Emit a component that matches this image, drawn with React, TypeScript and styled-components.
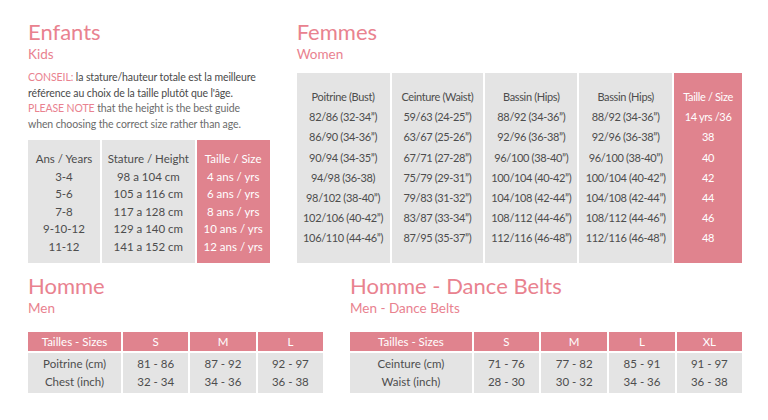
import React from 'react';
import styled, { createGlobalStyle } from 'styled-components';

const GlobalStyle = createGlobalStyle`
  html, body {
    margin: 0;
    padding: 0;
    background: #ffffff;
  }
  body {
    font-family: Lato, "Open Sans", sans-serif;
    color: #4f4f4f;
  }
`;

const PINK_TEXT = '#e9828f';
const PINK_CELL = '#e0838e';
const GRAY_CELL = '#e4e4e4';

const Page = styled.div`
  width: 768px;
  height: 420px;
  box-sizing: border-box;
  padding: 18px 26px 0 28px;
  display: flex;
  flex-direction: column;
  gap: 9px;
`;

const Row = styled.div<{ height: number }>`
  display: flex;
  gap: 27px;
  height: ${(p) => p.height}px;
`;

const Section = styled.div<{ width: number }>`
  width: ${(p) => p.width}px;
  display: flex;
  flex-direction: column;
`;

const Title = styled.h2`
  margin: 0;
  font-weight: 400;
  font-size: 22px;
  line-height: 28px;
  color: ${PINK_TEXT};
`;

const Subtitle = styled.div`
  font-size: 13.5px;
  line-height: 16px;
  color: ${PINK_TEXT};
`;

const Advice = styled.p`
  margin: 8px 0 0;
  font-size: 10.5px;
  line-height: 15.5px;
  letter-spacing: -0.1px;
`;

const AdviceLine = styled.span<{ soft?: boolean }>`
  display: block;
  color: ${(p) => (p.soft ? '#6b6b6b' : '#4a4a4a')};
  white-space: nowrap;
`;

const Accent = styled.span`
  color: ${PINK_TEXT};
`;

const ColumnTable = styled.div<{ cols: string; height: number }>`
  margin-top: auto;
  display: grid;
  grid-template-columns: ${(p) => p.cols};
  gap: 2px;
  height: ${(p) => p.height}px;
`;

const Column = styled.div<{ highlight?: boolean; pad: number; lh: number; size: number; tight?: boolean }>`
  background: ${(p) => (p.highlight ? PINK_CELL : GRAY_CELL)};
  color: ${(p) => (p.highlight ? '#ffffff' : '#4d4d4d')};
  padding-top: ${(p) => p.pad}px;
  display: flex;
  flex-direction: column;
  align-items: center;
  font-size: ${(p) => p.size}px;
  line-height: ${(p) => p.lh}px;
  letter-spacing: ${(p) => (p.tight ? '-0.35px' : '0')};
  white-space: nowrap;
`;

const GridTable = styled.div<{ cols: string }>`
  margin-top: auto;
  display: grid;
  grid-template-columns: ${(p) => p.cols};
  grid-template-rows: 19px 40px;
  gap: 2px;
  margin-bottom: 27px;
`;

const HeadCell = styled.div`
  background: ${PINK_CELL};
  color: #ffffff;
  font-size: 11.5px;
  display: flex;
  align-items: center;
  justify-content: center;
`;

const BodyCell = styled.div`
  background: ${GRAY_CELL};
  color: #4d4d4d;
  font-size: 11.5px;
  line-height: 18px;
  display: flex;
  flex-direction: column;
  align-items: center;
  justify-content: center;
`;

const kids = [
  ['Ans / Years', '3-4', '5-6', '7-8', '9-10-12', '11-12'],
  ['Stature / Height', '98 a 104 cm', '105 a 116 cm', '117 a 128 cm', '129 a 140 cm', '141 a 152 cm'],
  ['Taille / Size', '4 ans / yrs', '6 ans / yrs', '8 ans / yrs', '10 ans / yrs', '12 ans / yrs'],
];

const women = [
  ['Poitrine (Bust)', '82/86 (32-34”)', '86/90 (34-36”)', '90/94 (34-35”)', '94/98 (36-38)', '98/102 (38-40”)', '102/106 (40-42”)', '106/110 (44-46”)'],
  ['Ceinture (Waist)', '59/63 (24-25”)', '63/67 (25-26”)', '67/71 (27-28”)', '75/79 (29-31”)', '79/83 (31-32”)', '83/87 (33-34”)', '87/95 (35-37”)'],
  ['Bassin (Hips)', '88/92 (34-36”)', '92/96 (36-38”)', '96/100 (38-40”)', '100/104 (40-42”)', '104/108 (42-44”)', '108/112 (44-46”)', '112/116 (46-48”)'],
  ['Bassin (Hips)', '88/92 (34-36”)', '92/96 (36-38”)', '96/100 (38-40”)', '100/104 (40-42”)', '104/108 (42-44”)', '108/112 (44-46”)', '112/116 (46-48”)'],
  ['Taille / Size', '14 yrs /36', '38', '40', '42', '44', '46', '48'],
];

const men = {
  head: ['Tailles - Sizes', 'S', 'M', 'L'],
  body: [
    ['Poitrine (cm)', 'Chest (inch)'],
    ['81 - 86', '32 - 34'],
    ['87 - 92', '34 - 36'],
    ['92 - 97', '36 - 38'],
  ],
};

const belts = {
  head: ['Tailles - Sizes', 'S', 'M', 'L', 'XL'],
  body: [
    ['Ceinture (cm)', 'Waist (inch)'],
    ['71 - 76', '28 - 30'],
    ['77 - 82', '30 - 32'],
    ['85 - 91', '34 - 36'],
    ['91 - 97', '36 - 38'],
  ],
};

const SizeGrid = ({ data, cols }: { data: { head: string[]; body: string[][] }; cols: string }) => (
  <GridTable cols={cols}>
    {data.head.map((h, i) => (
      <HeadCell key={`h${i}`}>{h}</HeadCell>
    ))}
    {data.body.map((lines, i) => (
      <BodyCell key={`b${i}`}>
        {lines.map((l) => (
          <span key={l}>{l}</span>
        ))}
      </BodyCell>
    ))}
  </GridTable>
);

export default function App() {
  return (
    <>
      <GlobalStyle />
      <Page>
        <Row height={245}>
          <Section width={242}>
            <Title>Enfants</Title>
            <Subtitle>Kids</Subtitle>
            <Advice>
              <AdviceLine>
                <Accent>CONSEIL:</Accent> la stature/hauteur totale est la meilleure
              </AdviceLine>
              <AdviceLine>référence au choix de la taille plutôt que l'âge.</AdviceLine>
              <AdviceLine soft>
                <Accent>PLEASE NOTE</Accent> that the height is the best guide
              </AdviceLine>
              <AdviceLine soft>when choosing the correct size rather than age.</AdviceLine>
            </Advice>
            <ColumnTable cols="72fr 93fr 73fr" height={123}>
              {kids.map((col, i) => (
                <Column key={i} highlight={i === 2} pad={10} lh={17.5} size={11.5}>
                  {col.map((c) => (
                    <span key={c}>{c}</span>
                  ))}
                </Column>
              ))}
            </ColumnTable>
          </Section>
          <Section width={446}>
            <Title>Femmes</Title>
            <Subtitle>Women</Subtitle>
            <ColumnTable cols="93fr 92fr 92fr 93fr 68fr" height={190}>
              {women.map((col, i) => (
                <Column key={i} highlight={i === 4} pad={14} lh={20.2} size={11} tight>
                  {col.map((c, j) => (
                    <span key={j}>{c}</span>
                  ))}
                </Column>
              ))}
            </ColumnTable>
          </Section>
        </Row>
        <Row height={148}>
          <Section width={295}>
            <Title>Homme</Title>
            <Subtitle>Men</Subtitle>
            <SizeGrid data={men} cols="94fr 66fr 66fr 66fr" />
          </Section>
          <Section width={392}>
            <Title>Homme - Dance Belts</Title>
            <Subtitle>Men - Dance Belts</Subtitle>
            <SizeGrid data={belts} cols="123fr 66fr 67fr 66fr 66fr" />
          </Section>
        </Row>
      </Page>
    </>
  );
}
